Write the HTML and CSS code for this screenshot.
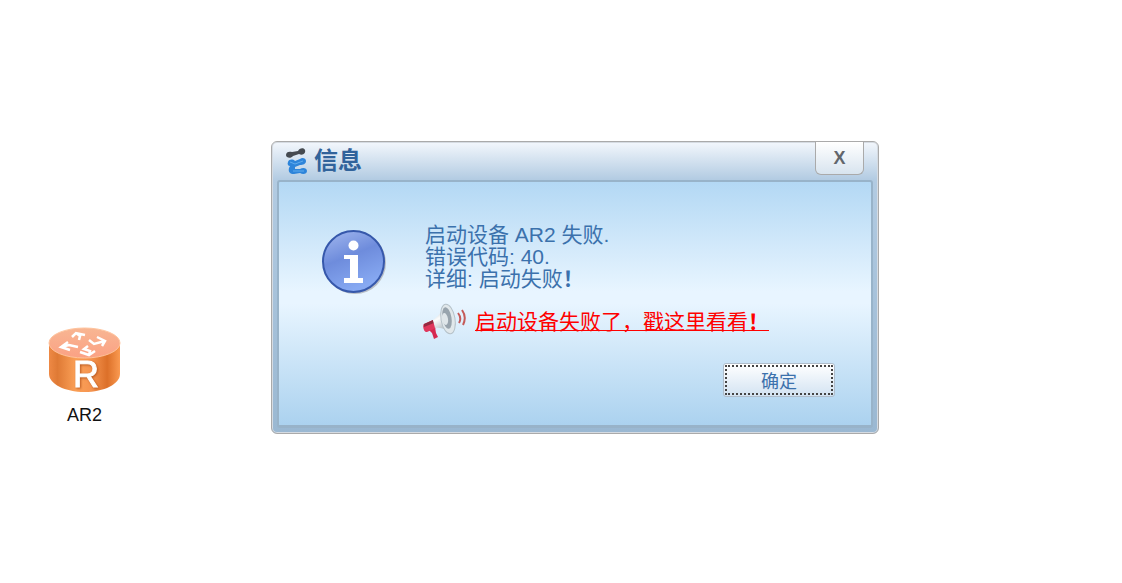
FILE: index.html
```html
<!DOCTYPE html>
<html lang="zh-CN">
<head>
	<meta charset="utf-8">
	<title>信息</title>
	<meta name="viewport" content="width=device-width, initial-scale=1.0">
	<link rel="stylesheet" href="styles.css">
</head>
<body>
	<main class="workspace">
		<figure class="device">
			<svg class="router" viewBox="0 0 73 66" aria-hidden="true">
				<defs>
					<linearGradient id="side">
						<stop offset="0" stop-color="#ee8945"/>
						<stop offset=".12" stop-color="#df7a35"/>
						<stop offset=".38" stop-color="#fba057"/>
						<stop offset=".6" stop-color="#f59450"/>
						<stop offset=".82" stop-color="#dc7029"/>
						<stop offset="1" stop-color="#fa9a51"/>
					</linearGradient>
					<linearGradient id="top" x2="0" y2="1">
						<stop offset="0" stop-color="#f8b693"/>
						<stop offset="1" stop-color="#fba184"/>
					</linearGradient>
				</defs>
				<path d="M1 16v31c0 10 16 18 35.500 18S72 57 72 47V16z" fill="url(#side)"/>
				<ellipse cx="36.500" cy="16" rx="35.500" ry="15" fill="url(#top)" stroke="#ffc39c"/>
				<g fill="none" stroke="#fff" stroke-width="2.500">
					<path d="M24 10l4-4 9 2M28 6l4 3-1 4"/>
					<path d="M49 10l8 4-3 5M57 14l-11 3-5-4"/>
					<path d="M20 15l-7 5 9 3M13 20l8-2 9 2"/>
					<path d="M32 25l9 3 6-4M41 28l1-4-6-2 4-3"/>
				</g>
				<text class="router-letter" x="25" y="60">R</text>
			</svg>
			<figcaption>AR2</figcaption>
		</figure>

		<section class="dialog" role="dialog" aria-labelledby="dialog-title">
			<header class="titlebar">
				<svg class="logo" viewBox="0 0 24 28" aria-hidden="true">
					<path d="M1 8c0-3 3-4 6-3l6-1c1-3 6-4 7-1s-2 6-6 4l-6 2C6 12 1 11 1 8z" fill="#454a50"/>
					<path d="M3 15c1-3 5-3 7-1l5-2c2-2 6-1 6 2s-3 4-6 4l-5 2 0 2 5 0c3-2 7-1 7 2s-4 4-7 2l-6 1c-4 0-6-2-5-6l1-2c-2 0-3-2-2-4z" fill="#2d84da"/>
					<path d="M5 15l5 2 8-3M8 24l11 0" fill="none" stroke="#5facee"/>
				</svg>
				<h1 id="dialog-title">信息</h1>
				<button class="close" type="button" aria-label="关闭">X</button>
			</header>
			<div class="content">
				<div class="message">
					<svg class="info" viewBox="0 0 66 66" aria-hidden="true">
						<defs>
							<linearGradient id="ball" x2=".4" y2="1">
								<stop offset="0" stop-color="#a4b9ef"/>
								<stop offset=".5" stop-color="#6e8cdc"/>
								<stop offset="1" stop-color="#87a9f2"/>
							</linearGradient>
						</defs>
						<circle cx="33" cy="34" r="31" fill="#b9bfc6"/>
						<circle cx="31.500" cy="32.500" r="30.500" fill="url(#ball)" stroke="#3658ab" stroke-width="2"/>
						<circle cx="31.500" cy="16.500" r="5" fill="#fff"/>
						<path d="M22 26h14v23h5v5H22v-5h6V30h-6z" fill="#fff"/>
					</svg>
					<div class="details">
						<p>启动设备 AR2 失败.<br>错误代码: 40.<br>详细: 启动失败<b>！</b></p>
						<div class="help">
							<svg class="horn" viewBox="0 0 44 38" aria-hidden="true">
								<defs>
									<linearGradient id="cone" x2=".4" y2="1">
										<stop offset="0" stop-color="#a8b2b8"/>
										<stop offset=".5" stop-color="#fbfcfc"/>
										<stop offset="1" stop-color="#a8b4bb"/>
									</linearGradient>
								</defs>
								<path d="M6 27l6-3 1 6 2 4-4 2-2-6z" fill="#d62850"/>
								<path d="M1 21l9-4 3 8-9 4c-3 1-5-7-3-8z" fill="#df375c"/>
								<path d="M1 21l9-4 1 3-10 4z" fill="#942a40"/>
								<path d="M10 17c6-4 9-9 11-14l9 27c-6-3-11-6-18-5z" fill="url(#cone)"/>
								<ellipse cx="25" cy="16" rx="7" ry="15" transform="rotate(-10 25 16)" fill="#e1e8eb" stroke="#b5c1c8"/>
								<ellipse cx="24" cy="15" rx="4.500" ry="11" transform="rotate(-10 24 15)" fill="#98a4ad"/>
								<ellipse cx="22" cy="16" rx="3" ry="6" transform="rotate(-10 22 16)" fill="#dfe6e9"/>
								<path d="M35 10q4 5 1 10M39 7q5 7 1 15" fill="none" stroke="#c55b59" stroke-width="2"/>
							</svg>
							<a href="#">启动设备失败了，戳这里看看<b>！</b></a>
						</div>
					</div>
				</div>
				<div class="actions">
					<button class="ok" type="button">确定</button>
				</div>
			</div>
		</section>
	</main>
</body>
</html>
```
FILE: styles.css
```css
* {
	box-sizing: border-box;
	margin: 0;
	padding: 0;
}
body {
	background: #fff;
	font-family: "Liberation Sans", "Noto Sans CJK SC", sans-serif;
}
.workspace {
	display: flex;
	align-items: flex-start;
	gap: 150px;
	padding: 141px 48px;
}
.device {
	width: 73px;
	margin-top: 186px;
	flex-shrink: 0;
	text-align: center;
	font-size: 18px;
	line-height: 20px;
	color: #111;
}
.router {
	display: block;
	width: 100%;
	margin-bottom: 12px;
	overflow: visible;
}
.router-letter {
	font-size: 36px;
	fill: #fff;
	stroke: #fff;
	filter: drop-shadow(1px 1px 1px #b9581f);
}
.dialog {
	flex: 0 1 608px;
	padding: 0 5px 5px;
	border: 1px solid #aaa;
	border-radius: 6px;
	background: linear-gradient(#f3f7fc, #b2cbe2 38px, #9ab8d2);
	box-shadow: inset 0 0 0 1px #d5dbe2;
}
.titlebar {
	display: flex;
	align-items: center;
	height: 38px;
	padding: 0 9px 0 8px;
}
.logo {
	width: 24px;
	height: 28px;
	margin-right: 5px;
}
h1 {
	font-size: 24px;
	line-height: 32px;
	color: #31639b;
}
.close {
	align-self: flex-start;
	width: 49px;
	height: 33px;
	margin-left: auto;
	border: 1px solid #aaa;
	border-top: 0;
	border-radius: 0 0 6px 6px;
	background: linear-gradient(#fff, #d8e4ef);
	font: bold 18px "Liberation Sans", sans-serif;
	color: #62666c;
}
.content {
	padding: 42px 36px 28px 43px;
	border: 2px solid #98b3c9;
	border-bottom-width: 3px;
	border-radius: 3px;
	background: linear-gradient(#b3d8f4, #e8f5ff 45%, #e8f5ff 50%, #abd2ef);
}
.message {
	display: flex;
	gap: 37px;
}
.info {
	width: 66px;
	height: 66px;
	margin-top: 5px;
	flex-shrink: 0;
}
.details {
	font-size: 21px;
	line-height: 22px;
	color: #3b71ac;
}
.help {
	display: flex;
	align-items: center;
	gap: 8px;
	margin-top: 13px;
}
.horn {
	width: 44px;
	height: 38px;
	margin-left: -2px;
	flex-shrink: 0;
}
.help a {
	color: #f00;
	text-decoration-thickness: 1px;
	text-decoration-skip-ink: none;
	text-underline-offset: 1px;
}
.actions {
	display: flex;
	justify-content: flex-end;
	margin-top: 22px;
}
.ok {
	width: 112px;
	height: 34px;
	border: 1px solid #b0bdcb;
	border-radius: 3px;
	outline: 2px dotted #444;
	outline-offset: -4px;
	background: linear-gradient(#fff, #d3e3f2);
	font: 18px "Liberation Sans", "Noto Sans CJK SC", sans-serif;
	color: #3b71ac;
}
```
